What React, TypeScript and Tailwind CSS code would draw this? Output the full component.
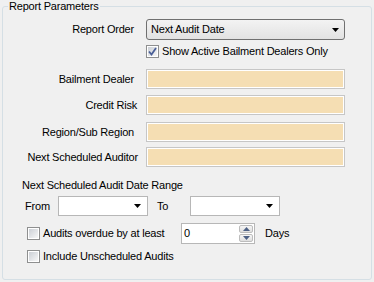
import React from "react";

function Arrow({ className = "" }: { className?: string }) {
  return (
    <svg width="7" height="4" viewBox="0 0 7 4" className={className}>
      <path d="M0 0H7L3.5 4Z" fill="#000" />
    </svg>
  );
}

function CheckBox({ checked = false }: { checked?: boolean }) {
  return (
    <div className="w-[13px] h-[13px] border border-[#8e8f8f] bg-white p-[1px] shrink-0 relative">
      <div className="w-full h-full bg-gradient-to-br from-[#cbcfd5] to-[#f7f7f7]" />
      {checked && (
        <svg width="11" height="11" viewBox="0 0 11 11" className="absolute left-0 top-0">
          <path d="M2 5.5L4.5 8.5L9 2" stroke="#4a5f97" strokeWidth="1.8" fill="none" />
        </svg>
      )}
    </div>
  );
}

function TextField() {
  return (
    <div className="ml-[12px] w-[199px] h-[20px] border border-[#c6c6c6] bg-[#f5deb3] shadow-[inset_0_0_0_1px_#ffffff]" />
  );
}

function DateBox() {
  return (
    <div className="w-[90px] h-[20px] border border-[#b7b7b7] bg-white flex items-center justify-end pr-[6px]">
      <Arrow />
    </div>
  );
}

export default function App() {
  return (
    <div className="w-[374px] h-[282px] bg-[#f0f0f0] pl-[2px] text-[11px] leading-[13px] tracking-[-0.2px] text-black font-['Liberation_Sans',Arial,sans-serif]">
      <fieldset className="w-[370px] h-[280px] border border-[#d5dfe5] rounded-[3px]">
        <legend className="ml-[5px] px-[1px] leading-[13px]">Report Parameters</legend>

        {/* report order */}
        <div className="flex items-center h-[21px] mt-[6px]">
          <span className="w-[131px] text-right">Report Order</span>
          <div className="ml-[12px] w-[199px] h-[21px] rounded-[3px] border border-[#707070] bg-gradient-to-b from-[#f3f3f3] to-[#e2e2e2] flex items-center pl-[4px] pr-[5px]">
            <span className="flex-1">Next Audit Date</span>
            <Arrow />
          </div>
        </div>

        <div className="flex items-center h-[13px] mt-[5px] pl-[143px] gap-[3px]">
          <CheckBox checked />
          <span>Show Active Bailment Dealers Only</span>
        </div>

        {/* filters */}
        <div className="flex items-center mt-[11px]">
          <span className="w-[131px] text-right">Bailment Dealer</span>
          <TextField />
        </div>
        <div className="flex items-center mt-[6px]">
          <span className="w-[134px] text-right">Credit Risk</span>
          <div className="-ml-[3px]"><TextField /></div>
        </div>
        <div className="flex items-center mt-[7px]">
          <span className="w-[131px] text-right">Region/Sub Region</span>
          <TextField />
        </div>
        <div className="flex items-center mt-[5px]">
          <span className="w-[135px] text-right">Next Scheduled Auditor</span>
          <div className="-ml-[4px]"><TextField /></div>
        </div>

        {/* date range */}
        <div className="mt-[12px] pl-[19px]">Next Scheduled Audit Date Range</div>
        <div className="flex items-center mt-[4px] pl-[22px]">
          <span className="w-[33px]">From</span>
          <DateBox />
          <span className="w-[33px] ml-[9px]">To</span>
          <DateBox />
        </div>

        <div className="flex items-center mt-[7px] pl-[24px]">
          <CheckBox />
          <span className="ml-[3px] w-[138px]">Audits overdue by at least</span>
          <div className="w-[74px] h-[21px] border border-[#b7b7b7] bg-white flex items-stretch">
            <span className="flex-1 pl-[2px] self-center">0</span>
            <div className="w-[15px] flex flex-col gap-[1px] p-[1px] pl-0">
              <div className="flex-1 border border-[#bcbcbc] rounded-[2px] bg-gradient-to-b from-[#f6f6f6] to-[#dedede] flex items-center justify-center">
                <svg width="7" height="4" viewBox="0 0 7 4"><path d="M0 4H7L3.5 0Z" fill="#4d6185" /></svg>
              </div>
              <div className="flex-1 border border-[#bcbcbc] rounded-[2px] bg-gradient-to-b from-[#f6f6f6] to-[#dedede] flex items-center justify-center">
                <svg width="7" height="4" viewBox="0 0 7 4"><path d="M0 0H7L3.5 4Z" fill="#4d6185" /></svg>
              </div>
            </div>
          </div>
          <span className="ml-[10px]">Days</span>
        </div>

        <div className="flex items-center mt-[6px] pl-[24px] gap-[3px]">
          <CheckBox />
          <span>Include Unscheduled Audits</span>
        </div>
      </fieldset>
    </div>
  );
}
